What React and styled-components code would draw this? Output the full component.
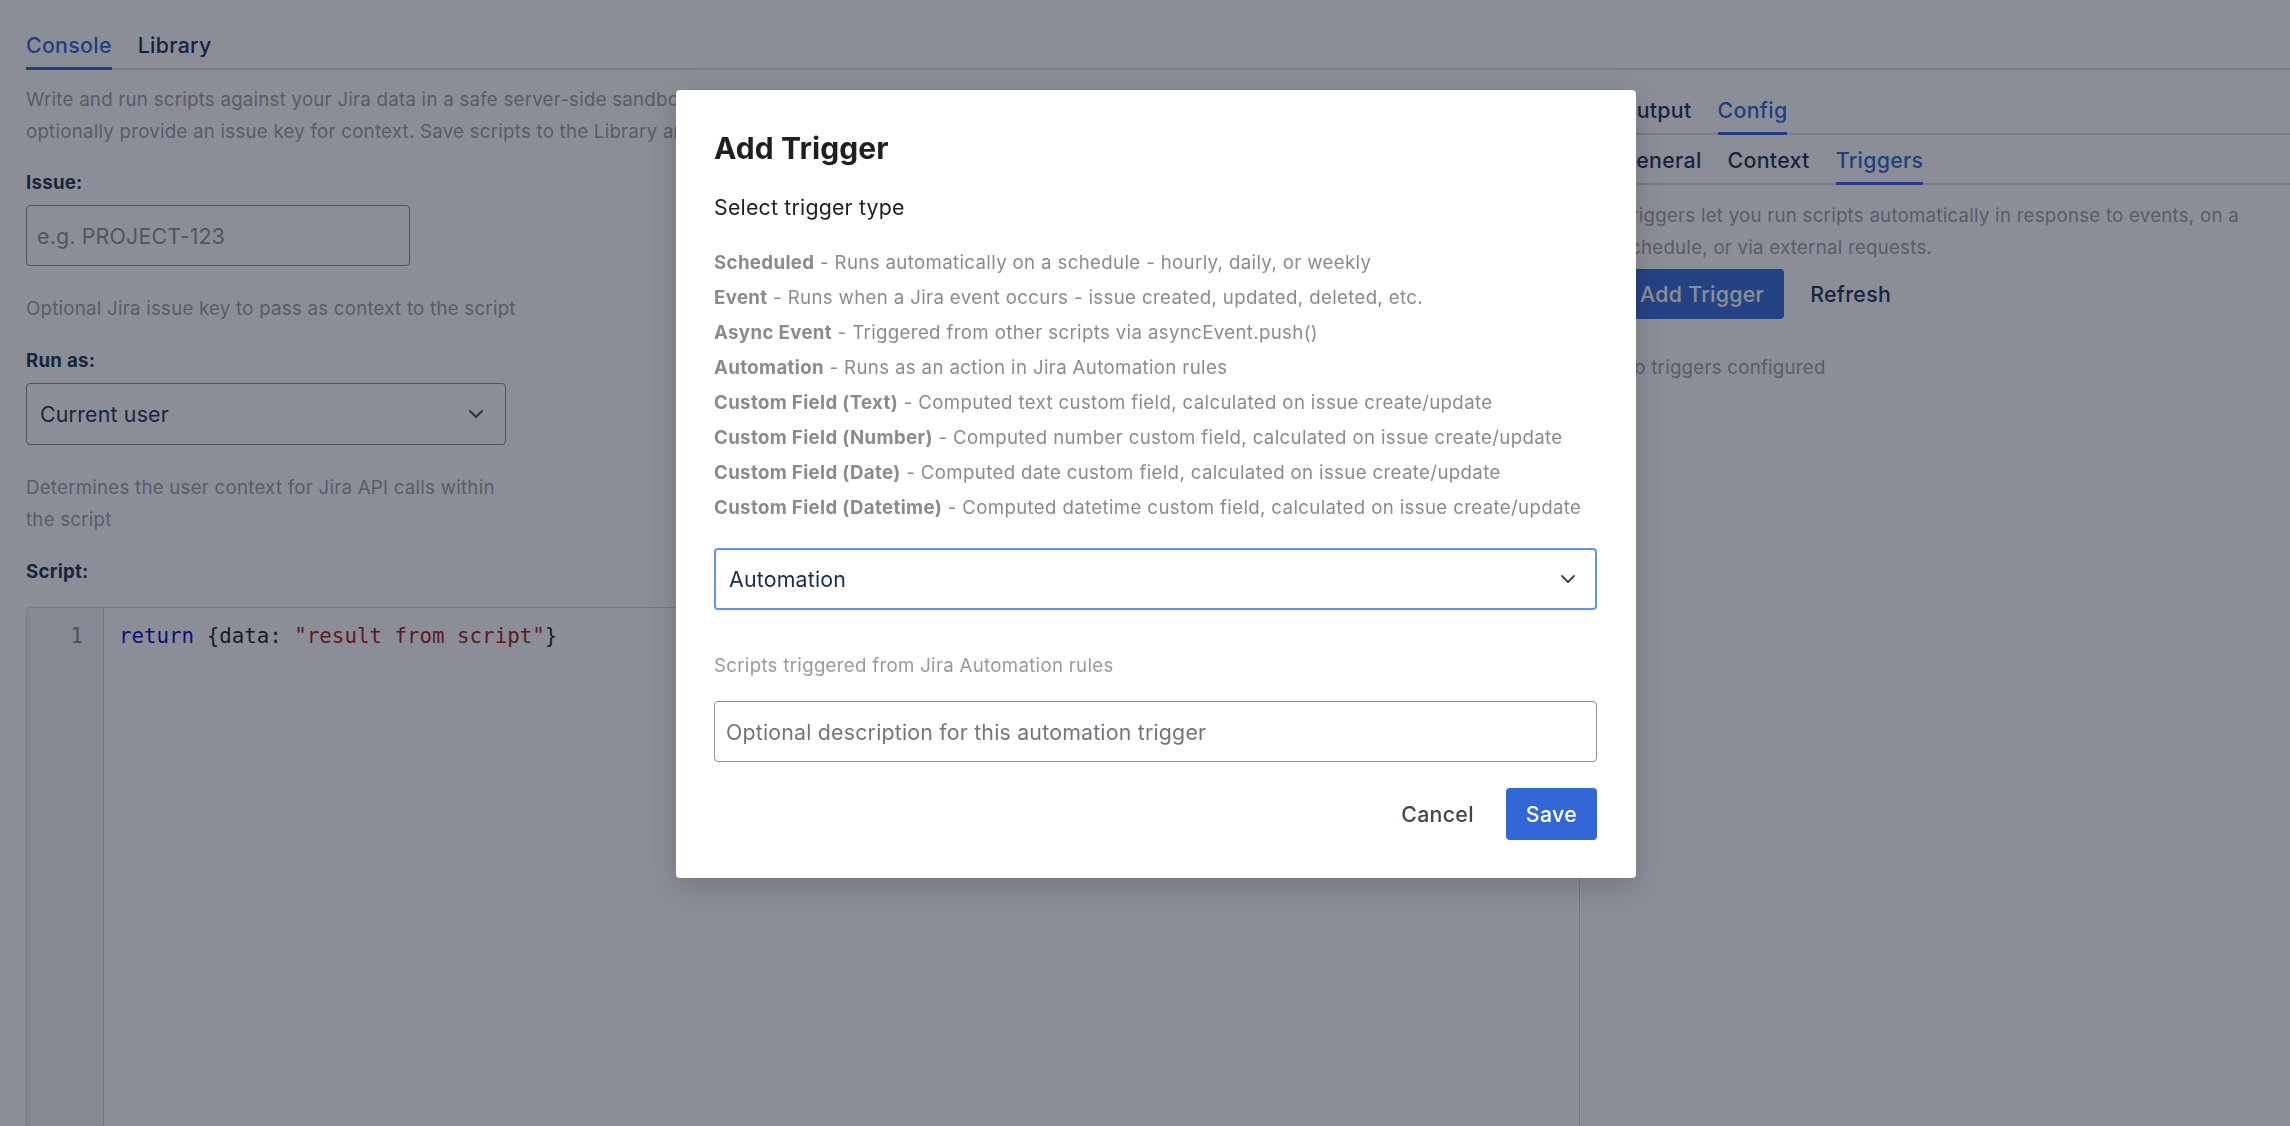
import React from "react";
import styled, { createGlobalStyle } from "styled-components";

const GlobalStyle = createGlobalStyle`
  html, body { margin: 0; padding: 0; background: #ffffff; }
  body {
    font-family: Inter, "Noto Sans", "Liberation Sans", sans-serif;
    color: #172b4d;
    -webkit-font-smoothing: antialiased;
  }
  * { box-sizing: border-box; }
`;

const BLUE = "#3367d6";

const Page = styled.div`
  padding: 29px 0 0 26px;
  height: 1126px;
  overflow: hidden;
`;

const TabBar = styled.div`
  display: flex;
  gap: 26px;
  border-bottom: 2px solid #d9dce2;
  margin-top: ${(p) => p.$mt || 0}px;
`;

const Tab = styled.div`
  font-size: 21.33px;
  line-height: 32px;
  font-weight: 500;
  letter-spacing: 0.3px;
  padding-bottom: 6px;
  margin-bottom: -2px;
  border-bottom: 3px solid ${(p) => (p.$active ? "#2c5fd4" : "transparent")};
  color: ${(p) => (p.$active ? "#2c5fd4" : "#172b4d")};
`;

const Columns = styled.div`
  display: grid;
  grid-template-columns: 1554px 1fr;
  column-gap: 40px;
  margin-top: 14px;
`;

const LeftCol = styled.div`
  display: flex;
  flex-direction: column;
  min-width: 0;
`;

const RightCol = styled.div`
  display: flex;
  flex-direction: column;
  padding-top: 10px;
  min-width: 0;
`;

const Text = styled.div`
  font-size: 18.67px;
  line-height: 32px;
  letter-spacing: 0.25px;
  color: #999ba3;
  margin-top: ${(p) => p.$mt || 0}px;
  max-width: ${(p) => (p.$max ? `${p.$max}px` : "none")};
`;

const Label = styled.div`
  font-size: 18.67px;
  line-height: 32px;
  font-weight: 700;
  letter-spacing: 0.25px;
  color: #172b4d;
  margin-top: ${(p) => p.$mt || 0}px;
  margin-bottom: 6px;
`;

const Input = styled.div`
  width: ${(p) => p.$w || "100%"};
  height: 61px;
  border: 1px solid #858891;
  border-radius: 4px;
  display: flex;
  align-items: center;
  padding-left: ${(p) => p.$pl || 10}px;
  font-size: 21.33px;
  letter-spacing: 0.2px;
  color: ${(p) => (p.$placeholder ? "#8a8d95" : "#172b4d")};
  background: #ffffff;
`;

const SelectBox = styled.div`
  width: ${(p) => p.$w || "100%"};
  height: 62px;
  border: ${(p) => (p.$focused ? "2px solid #6294ee" : "1px solid #858891")};
  border-radius: 4px;
  display: flex;
  align-items: center;
  justify-content: space-between;
  padding-left: 13px;
  padding-right: ${(p) => (p.$focused ? 19 : 21)}px;
  font-size: 21.33px;
  letter-spacing: 0.2px;
  color: #172b4d;
  background: #ffffff;
`;

const Chevron = () => (
  <svg width="16" height="10" viewBox="0 0 16 10" style={{ color: "#42464f" }}>
    <polyline
      points="2,2 8,8 14,2"
      fill="none"
      stroke="currentColor"
      strokeWidth="2"
      strokeLinecap="round"
      strokeLinejoin="round"
    />
  </svg>
);

const Editor = styled.div`
  margin-top: 13px;
  display: flex;
  height: 560px;
  border: 1px solid #d2d5db;
  border-radius: 4px;
  overflow: hidden;
  font-family: "DejaVu Sans Mono", "Liberation Mono", monospace;
  font-size: 20.8px;
  line-height: 28px;
`;

const Gutter = styled.div`
  width: 77px;
  flex: none;
  background: #f3f4f6;
  border-right: 1px solid #d2d5db;
  text-align: right;
  padding: 14px 20px 0 0;
  color: #80838c;
`;

const Code = styled.div`
  padding: 14px 0 0 15px;
  color: #1b1b1b;
  white-space: pre;
`;

const Kw = styled.span`
  color: #0000d0;
`;

const Str = styled.span`
  color: #a31515;
`;

const ButtonRow = styled.div`
  display: flex;
  gap: ${(p) => p.$gap || 6}px;
  margin-top: ${(p) => p.$mt || 0}px;
  justify-content: ${(p) => (p.$end ? "flex-end" : "flex-start")};
`;

const Button = styled.div`
  height: ${(p) => p.$h || 50}px;
  padding: 0 20px;
  display: flex;
  align-items: center;
  border-radius: 4px;
  font-size: 21.33px;
  font-weight: 500;
  letter-spacing: 0.3px;
  background: ${(p) => (p.$primary ? BLUE : "transparent")};
  color: ${(p) => (p.$primary ? "#ffffff" : p.$muted ? "#43464e" : "#172b4d")};
`;

const Overlay = styled.div`
  position: fixed;
  inset: 0;
  background: rgba(23, 30, 48, 0.5);
  display: flex;
  justify-content: center;
  align-items: flex-start;
  padding-top: 90px;
  padding-left: 22px;
`;

const Modal = styled.div`
  width: 960px;
  background: #ffffff;
  border-radius: 4px;
  padding: 40px 39px 38px 38px;
  box-shadow: 0 8px 28px rgba(0, 0, 0, 0.18);
  display: flex;
  flex-direction: column;
`;

const Title = styled.h2`
  margin: 0;
  font-size: 30px;
  line-height: 36px;
  font-weight: 700;
  letter-spacing: 0.1px;
  color: #1d1f23;
`;

const Subtitle = styled.div`
  margin-top: 25px;
  font-size: 21.33px;
  line-height: 32px;
  letter-spacing: 0.2px;
  color: #1d1f23;
`;

const TypeList = styled.div`
  margin-top: 27px;
  display: flex;
  flex-direction: column;
  gap: 8.33px;
`;

const TypeItem = styled.div`
  font-size: 18.67px;
  line-height: 26.67px;
  letter-spacing: 0.35px;
  color: #8b8b8b;
  b {
    font-weight: 700;
  }
`;

const Hint = styled.div`
  margin-top: 43px;
  font-size: 18.67px;
  line-height: 26.67px;
  letter-spacing: 0.3px;
  color: #9a9a9a;
`;

const ModalInput = styled(Input)`
  margin-top: 22px;
  border-color: #8f9196;
  padding-left: 11px;
  color: #72757d;
`;

const ModalSelect = styled(SelectBox)`
  margin-top: 26px;
`;

const triggerTypes = [
  ["Scheduled", "Runs automatically on a schedule - hourly, daily, or weekly"],
  ["Event", "Runs when a Jira event occurs - issue created, updated, deleted, etc."],
  ["Async Event", "Triggered from other scripts via asyncEvent.push()"],
  ["Automation", "Runs as an action in Jira Automation rules"],
  ["Custom Field (Text)", "Computed text custom field, calculated on issue create/update"],
  ["Custom Field (Number)", "Computed number custom field, calculated on issue create/update"],
  ["Custom Field (Date)", "Computed date custom field, calculated on issue create/update"],
  ["Custom Field (Datetime)", "Computed datetime custom field, calculated on issue create/update"],
];

export default function App() {
  return (
    <>
      <GlobalStyle />
      <Page>
        <TabBar>
          <Tab $active>Console</Tab>
          <Tab>Library</Tab>
        </TabBar>
        <Columns>
          <LeftCol>
            <Text>
              Write and run scripts against your Jira data in a safe server-side sandbox. Scripts can call the Jira REST API and return a result to the Output panel, and you can
              <br />
              optionally provide an issue key for context. Save scripts to the Library and run them again later.
            </Text>
            <Label $mt={19}>Issue:</Label>
            <Input $w="384px" $placeholder>e.g. PROJECT-123</Input>
            <Text $mt={27}>Optional Jira issue key to pass as context to the script</Text>
            <Label $mt={20}>Run as:</Label>
            <SelectBox $w="480px">
              <span>Current user</span>
              <Chevron />
            </SelectBox>
            <Text $mt={27} $max={480}>
              Determines the user context for Jira API calls within the script
            </Text>
            <Label $mt={20}>Script:</Label>
            <Editor>
              <Gutter>1</Gutter>
              <Code>
                <Kw>return</Kw> {"{data: "}
                <Str>"result from script"</Str>
                {"}"}
              </Code>
            </Editor>
          </LeftCol>
          <RightCol>
            <TabBar>
              <Tab>Output</Tab>
              <Tab $active>Config</Tab>
            </TabBar>
            <TabBar $mt={9}>
              <Tab>General</Tab>
              <Tab>Context</Tab>
              <Tab $active>Triggers</Tab>
            </TabBar>
            <Text $mt={15} $max={644}>
              Triggers let you run scripts automatically in response to events, on a schedule, or via external requests.
            </Text>
            <ButtonRow $mt={5}>
              <Button $primary>Add Trigger</Button>
              <Button>Refresh</Button>
            </ButtonRow>
            <Text $mt={33}>No triggers configured</Text>
          </RightCol>
        </Columns>
      </Page>
      <Overlay>
        <Modal>
          <Title>Add Trigger</Title>
          <Subtitle>Select trigger type</Subtitle>
          <TypeList>
            {triggerTypes.map(([name, desc]) => (
              <TypeItem key={name}>
                <b>{name}</b> - {desc}
              </TypeItem>
            ))}
          </TypeList>
          <ModalSelect $focused>
            <span>Automation</span>
            <Chevron />
          </ModalSelect>
          <Hint>Scripts triggered from Jira Automation rules</Hint>
          <ModalInput $placeholder>Optional description for this automation trigger</ModalInput>
          <ButtonRow $mt={26} $gap={12} $end>
            <Button $h={52} $muted>Cancel</Button>
            <Button $h={52} $primary>Save</Button>
          </ButtonRow>
        </Modal>
      </Overlay>
    </>
  );
}
